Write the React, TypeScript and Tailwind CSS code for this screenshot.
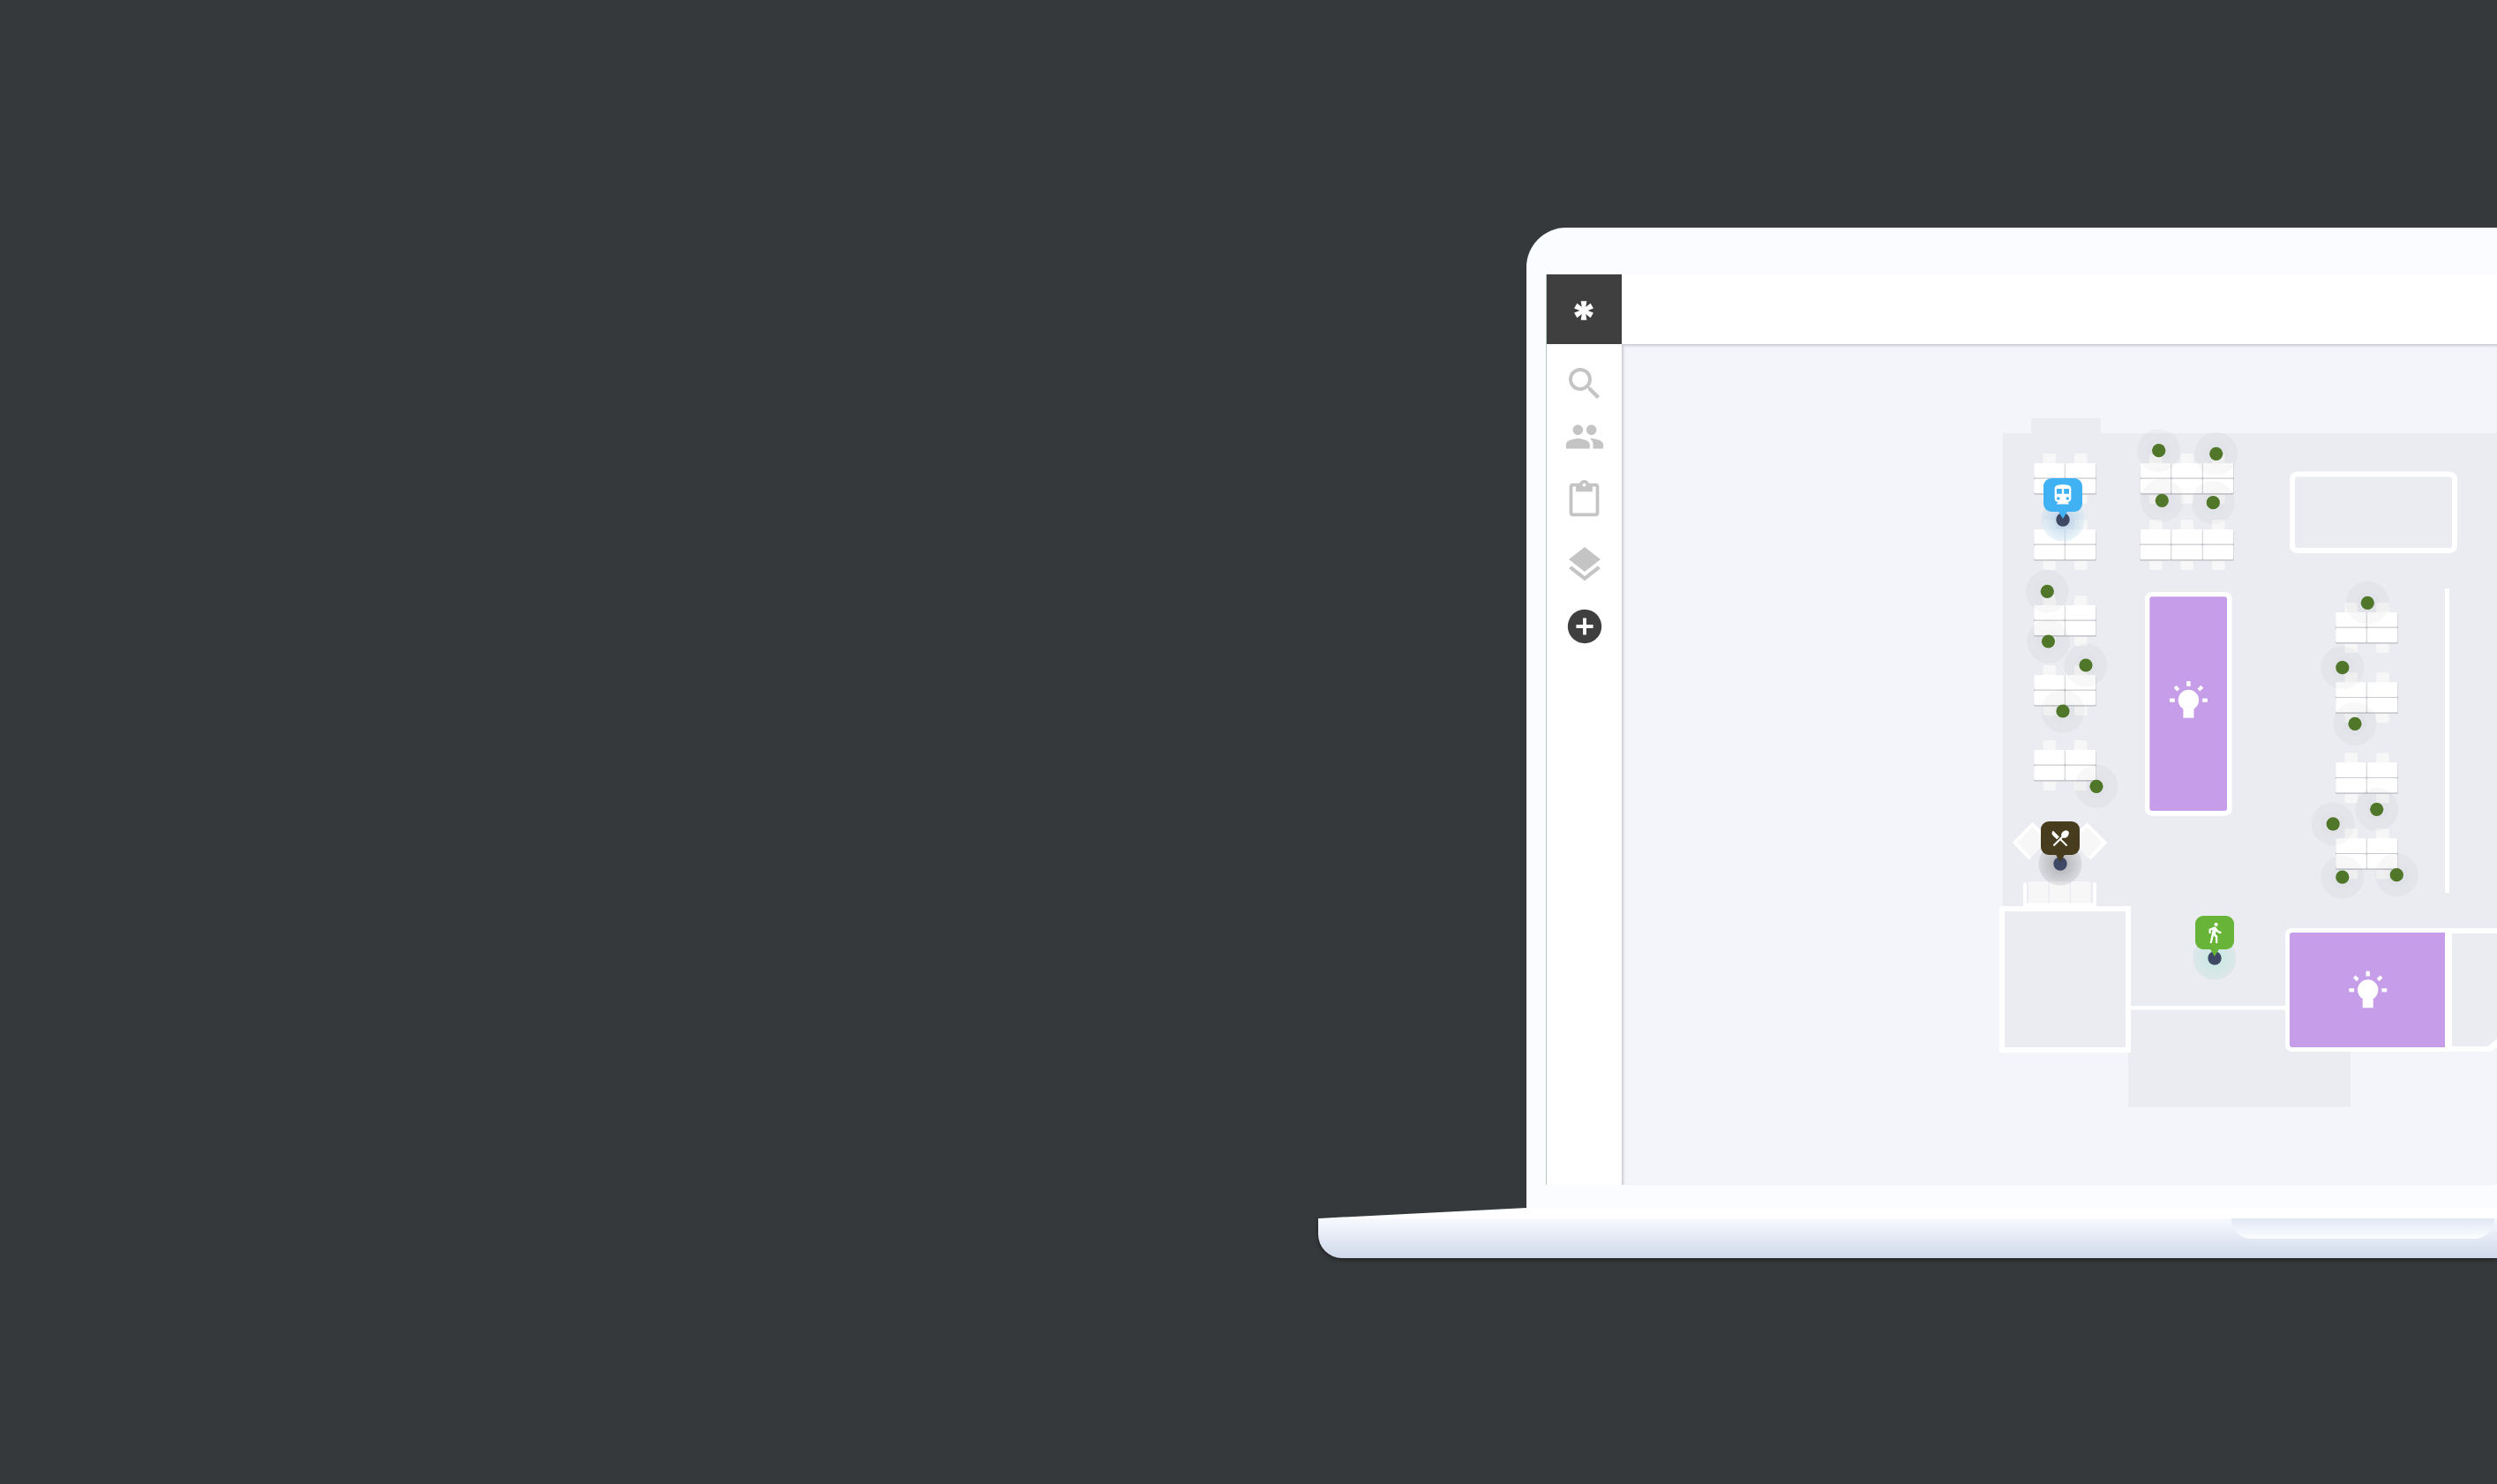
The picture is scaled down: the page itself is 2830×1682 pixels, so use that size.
import React from "react";
import {
  MdSearch,
  MdPeople,
  MdContentPaste,
  MdLayers,
  MdAddCircle,
  MdDirectionsSubway,
  MdRestaurantMenu,
  MdDirectionsWalk,
} from "react-icons/md";

const deskGroups = [
  { x: 2305, y: 525, cols: 2 },
  { x: 2305, y: 600, cols: 2 },
  { x: 2305, y: 686, cols: 2 },
  { x: 2305, y: 765, cols: 2 },
  { x: 2305, y: 850, cols: 2 },
  { x: 2425.5, y: 525, cols: 3 },
  { x: 2425.5, y: 600, cols: 3 },
  { x: 2647, y: 694, cols: 2 },
  { x: 2647, y: 773.3, cols: 2 },
  { x: 2647, y: 864.3, cols: 2 },
  { x: 2647, y: 950.3, cols: 2 },
];

const sensors = [
  [2446.7, 510.7],
  [2511.7, 514.3],
  [2450.3, 567.3],
  [2508.3, 569.7],
  [2320.3, 670.3],
  [2321.5, 727],
  [2364, 754],
  [2338, 806],
  [2376, 891.3],
  [2683.3, 683.3],
  [2654.8, 756.7],
  [2669, 820.3],
  [2693.7, 917.3],
  [2644.2, 933.8],
  [2654.8, 994.2],
  [2716.3, 991.7],
];

function DeskGroup({ x, y, cols }: { x: number; y: number; cols: number }) {
  const columns = Array.from({ length: cols }, (_, i) => x + i * 35.5);
  return (
    <g>
      {columns.map((cx) => (
        <g key={cx} fill="#f7f7f7">
          <rect x={cx + 10.5} y={y - 11} width="14.5" height="20" rx="2" />
          <rect x={cx + 10.5} y={y + 26} width="14.5" height="20" rx="2" />
        </g>
      ))}
      <rect x={x} y={y + 1} width={cols * 35.5} height="34.8" rx="1.5" fill="#c9cacf" />
      {columns.map((cx) => (
        <g key={cx} fill="#ffffff">
          <rect x={cx + 0.2} y={y} width="34.6" height="16.6" rx="1.5" />
          <rect x={cx + 0.2} y={y + 17.8} width="34.6" height="16.2" rx="1.5" />
        </g>
      ))}
    </g>
  );
}

function Bulb({ x, y }: { x: number; y: number }) {
  return (
    <g transform={`translate(${x} ${y})`} fill="#ffffff">
      <circle r="11.7" />
      <rect x="-6" y="8" width="12" height="12.3" />
      <rect x="-2.2" y="-21.3" width="4.4" height="5.8" />
      <rect x="-21.4" y="-1.8" width="5.8" height="4.2" />
      <rect x="15.7" y="-1.8" width="5.8" height="4.2" />
      <rect x="-2.8" y="-2" width="5.6" height="4" transform="translate(-13.4 -13.2) rotate(45)" />
      <rect x="-2.8" y="-2" width="5.6" height="4" transform="translate(13.4 -13.2) rotate(-45)" />
    </g>
  );
}

function FloorPlan() {
  return (
    <svg
      className="block"
      width="992"
      height="953"
      viewBox="1838 390 992 953"
      role="img"
      aria-label="Office floor plan"
    >
      <defs>
        <radialGradient id="haloBlue">
          <stop offset="0.3" stopColor="#a9c8e6" stopOpacity="0.6" />
          <stop offset="1" stopColor="#c8e2f0" stopOpacity="0.4" />
        </radialGradient>
        <radialGradient id="haloDark">
          <stop offset="0.3" stopColor="#5a5a5e" stopOpacity="0.34" />
          <stop offset="1" stopColor="#5a5a5e" stopOpacity="0.12" />
        </radialGradient>
        <radialGradient id="haloGreen">
          <stop offset="0.3" stopColor="#c8e8e2" stopOpacity="0.9" />
          <stop offset="1" stopColor="#d3e3e4" stopOpacity="0.6" />
        </radialGradient>
      </defs>

      <path
        fill="#ebecf1"
        d="M2270 491H2302V474H2381V491H2830V1182L2822 1190H2664V1255H2412V1190H2270Z"
      />

      <path d="M2304 937L2285 955L2303 971L2321 952Z" fill="#f7f7f7" />
      <path d="M2365 937L2384 955L2366 973L2348 952Z" fill="#f7f7f7" />
      <g fill="none" stroke="#ffffff" strokeWidth="4">
        <path d="M2301 973L2283.500 955L2303.500 934.500L2314 945" />
        <path d="M2368.500 973L2385.500 955L2365.500 935L2355 945" />
      </g>

      {deskGroups.map((g) => (
        <DeskGroup key={`${g.x}-${g.y}`} {...g} />
      ))}

      <g fill="#f7f7f7">
        <rect x="2299" y="999" width="22.500" height="26" rx="2" />
        <rect x="2323" y="999" width="22.500" height="26" rx="2" />
        <rect x="2347" y="999" width="22.500" height="26" rx="2" />
      </g>
      <path
        fill="#ffffff"
        d="M2293 1002q0-2 2-2t2 2V1023.500H2372V1002q0-2 2-2t2 2V1028H2293Z"
      />

      <rect x="2269" y="1030" width="143" height="160" fill="#ebecf1" stroke="#ffffff" strokeWidth="6" />
      <rect x="2415" y="1140" width="177" height="4.500" fill="#ffffff" />
      <rect x="2771" y="667" width="5" height="345" fill="#ffffff" />
      <rect x="2598" y="537.500" width="184" height="86.500" rx="5.500" fill="none" stroke="#ffffff" strokeWidth="6" />

      <rect x="2431" y="671" width="98.700" height="253.700" rx="8" fill="#ffffff" />
      <rect x="2436.300" y="676.300" width="87.700" height="242.700" rx="3" fill="#c69de9" />
      <Bulb x={2480.4} y={793.4} />

      <path
        fill="#ffffff"
        d="M2598 1052H2830V1186.500L2822.700 1192H2598a8 8 0 0 1-8-8V1060a8 8 0 0 1 8-8Z"
      />
      <path
        fill="#c69de9"
        d="M2598 1057H2771V1187H2598a3 3 0 0 1-3-3V1060a3 3 0 0 1 3-3Z"
      />
      <path fill="#ebecf1" d="M2779 1058H2830V1177.500L2819.500 1186H2779Z" />
      <Bulb x={2683.7} y={1122} />

      {sensors.map(([x, y]) => (
        <g key={`${x}-${y}`}>
          <circle cx={x} cy={y} r="24.500" fill="#3a3a3a" fillOpacity="0.035" />
          <circle cx={x} cy={y} r="14" fill="#3a3a3a" fillOpacity="0.006" />
          <circle cx={x} cy={y} r="7.600" fill="#507629" />
        </g>
      ))}

      <circle cx="2338" cy="589" r="24.500" fill="url(#haloBlue)" />
      <circle cx="2335" cy="979" r="24.500" fill="url(#haloDark)" />
      <circle cx="2510" cy="1086" r="24.500" fill="url(#haloGreen)" />
      <g fill="#3e4763">
        <circle cx="2338" cy="589" r="7.700" />
        <circle cx="2335" cy="979" r="7.700" />
        <circle cx="2510" cy="1086" r="7.700" />
      </g>
    </svg>
  );
}

function Pin({
  label,
  place,
  fill,
  children,
}: {
  label: string;
  place: string;
  fill: string;
  children: React.ReactNode;
}) {
  return (
    <button type="button" aria-label={label} className={`absolute flex flex-col items-center ${place}`}>
      <span className={`flex h-[38px] w-11 items-center justify-center rounded-[9px] text-white ${fill}`}>
        {children}
      </span>
      <span className={`-mt-px h-[9px] w-[11px] [clip-path:polygon(0_0,100%_0,50%_100%)] ${fill}`} />
    </button>
  );
}

const navItems = [
  { label: "Search", icon: <MdSearch size={48} />, tone: "text-[#c4c4c4]" },
  { label: "People", icon: <MdPeople size={46} />, tone: "mt-3 text-[#c4c4c4]" },
  { label: "Bookings", icon: <MdContentPaste size={45} />, tone: "mt-[23px] text-[#c4c4c4]" },
  { label: "Floors", icon: <MdLayers size={50} />, tone: "mt-[26px] text-[#c4c4c4]" },
  { label: "Add", icon: <MdAddCircle size={46} />, tone: "mt-[22px] text-[#3f3f3f]" },
];

export default function App() {
  return (
    <main className="flex min-h-screen overflow-hidden bg-[#36393c]">
      <div className="w-[1494px] shrink-0" />
      <section className="min-w-0 flex-1 pt-[258px]">
        <div className="ml-[236px] rounded-tl-[45px] bg-[#fbfcff] pt-[53px] pb-[26px] pl-[22px]">
          <div className="flex border-l border-[#b7c8c3] bg-white">
            <aside className="flex w-[85px] shrink-0 flex-col">
              <a href="#home" aria-label="Home" className="flex h-[79px] items-center justify-center bg-[#3f3f3f] pt-[3px] pr-0.5">
                <svg width="24" height="24" viewBox="-12 -12 24 24" aria-hidden="true">
                  <g fill="#ffffff">
                    <path d="M-3.300-10.700H3.300L1.700 0L3.300 10.700H-3.300L-1.700 0Z" />
                    <path d="M-3.300-10.700H3.300L1.700 0L3.300 10.700H-3.300L-1.700 0Z" transform="rotate(60)" />
                    <path d="M-3.300-10.700H3.300L1.700 0L3.300 10.700H-3.300L-1.700 0Z" transform="rotate(-60)" />
                  </g>
                </svg>
              </a>
              <nav aria-label="Main" className="flex flex-col items-center pt-[21px]">
                {navItems.map((item) => (
                  <button
                    key={item.label}
                    type="button"
                    aria-label={item.label}
                    className={`flex h-12 w-12 items-center justify-center ${item.tone}`}
                  >
                    {item.icon}
                  </button>
                ))}
              </nav>
            </aside>
            <div className="min-w-0 flex-1">
              <header className="h-[79px] bg-white" />
              <div className="relative overflow-hidden bg-[#f4f5fa] shadow-[inset_2px_2px_3px_#c9cacf]">
                <FloorPlan />
                <Pin label="Transit" place="left-[478px] top-[152px]" fill="bg-[#40b2f3]">
                  <MdDirectionsSubway size={28} />
                </Pin>
                <Pin label="Restaurant" place="left-[475px] top-[541px]" fill="bg-[#473d1e]">
                  <MdRestaurantMenu size={24} />
                </Pin>
                <Pin label="Walking" place="left-[650px] top-[648px]" fill="bg-[#67b439]">
                  <MdDirectionsWalk size={26} />
                </Pin>
              </div>
            </div>
          </div>
        </div>
        <div className="h-3 bg-white [clip-path:polygon(0_100%,236px_0,100%_0,100%_100%)]" />
        <div className="h-[45px] rounded-bl-[27px] bg-linear-to-b from-[#f8f9ff] to-[#cfd9ea] shadow-[0_2px_4px_#1f2123]">
          <div className="ml-auto mr-[3px] h-[23px] w-[298px] rounded-b-[22px] bg-linear-to-b from-[#e2e7f6] to-[#fcfdff]" />
        </div>
      </section>
    </main>
  );
}
